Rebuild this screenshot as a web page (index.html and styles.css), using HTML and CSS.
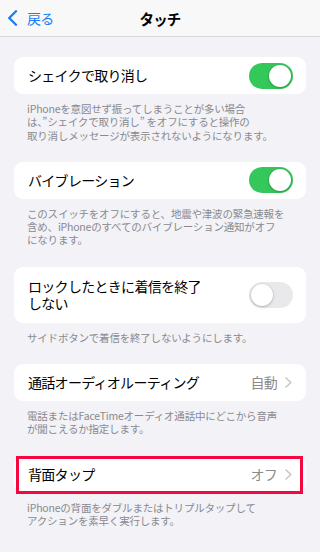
FILE: index.html
```html
<!DOCTYPE html>
<html lang="ja">
<head>
<meta charset="utf-8">
<title>タッチ</title>
<link rel="stylesheet" href="styles.css">
</head>
<body>
<header class="nav">
  <div class="back">
    <svg class="back-chev" width="11" height="16" viewBox="0 0 11 16"><path d="M9 1.2 L2.2 8 L9 14.8" fill="none" stroke="#1a7cf5" stroke-width="2.3" stroke-linecap="round" stroke-linejoin="round"/></svg>
    <span class="back-label">戻る</span>
  </div>
  <div class="nav-title">タッチ</div>
  <div></div>
</header>
<main class="list">
  <section class="group">
    <div class="card">
      <div class="row"><span class="row-label">シェイクで取り消し</span><span class="switch on"></span></div>
    </div>
    <p class="note">iPhoneを意図せず振ってしまうことが多い場合<br>は、”シェイクで取り消し” をオフにすると操作の<br>取り消しメッセージが表示されないようになります。</p>
  </section>
  <section class="group">
    <div class="card">
      <div class="row"><span class="row-label">バイブレーション</span><span class="switch on"></span></div>
    </div>
    <p class="note">このスイッチをオフにすると、地震や津波の緊急速報を<br>含め、iPhoneのすべてのバイブレーション通知がオフ<br>になります。</p>
  </section>
  <section class="group">
    <div class="card">
      <div class="row row-tall"><span class="row-label">ロックしたときに着信を終了<br>しない</span><span class="switch"></span></div>
    </div>
    <p class="note">サイドボタンで着信を終了しないようにします。</p>
  </section>
  <section class="group">
    <div class="card">
      <div class="row"><span class="row-label">通話オーディオルーティング</span><span class="detail"><span class="value">自動</span><svg class="chev" width="7" height="11" viewBox="0 0 7 11"><path d="M1 1 L5.8 5.5 L1 10" fill="none" stroke="#c4c4c7" stroke-width="1.5" stroke-linecap="round" stroke-linejoin="round"/></svg></span></div>
    </div>
    <p class="note">電話またはFaceTimeオーディオ通話中にどこから音声<br>が聞こえるか指定します。</p>
  </section>
  <section class="group">
    <div class="card card-marked">
      <div class="row"><span class="row-label">背面タップ</span><span class="detail"><span class="value">オフ</span><svg class="chev" width="7" height="11" viewBox="0 0 7 11"><path d="M1 1 L5.8 5.5 L1 10" fill="none" stroke="#c4c4c7" stroke-width="1.5" stroke-linecap="round" stroke-linejoin="round"/></svg></span></div>
      <span class="highlight"></span>
    </div>
    <p class="note">iPhoneの背面をダブルまたはトリプルタップして<br>アクションを素早く実行します。</p>
  </section>
</main>
</body>
</html>
```

FILE: styles.css
```css
* { box-sizing: border-box; }
html, body { margin: 0; padding: 0; }
body {
  width: 320px;
  height: 552px;
  overflow: hidden;
  background: #f2f2f7;
  font-family: "Noto Sans CJK JP", "Noto Sans", sans-serif;
  color: #000;
}
.nav {
  height: 37px;
  background: #f8f8f8;
  border-bottom: 1px solid #d7d7db;
  display: grid;
  grid-template-columns: 1fr auto 1fr;
  align-items: center;
}
.back {
  display: flex;
  align-items: center;
  padding-left: 7px;
  gap: 9px;
  color: #1a7cf5;
}
.back-chev { display: block; }
.back-label { font-size: 14px; letter-spacing: -0.7px; line-height: 17px; }
.nav-title {
  font-size: 14.5px;
  font-weight: 700;
  letter-spacing: -0.8px;
  line-height: 17px;
}
.list { padding: 20px 14px 0; }
.group { margin-bottom: 20px; }
.card {
  background: #fff;
  border-radius: 9px;
}
.card-marked { position: relative; }
.row {
  height: 37px;
  padding: 0 13px 0 14px;
  display: flex;
  align-items: center;
  justify-content: space-between;
}
.row-tall { height: 56px; }
.row-label {
  font-size: 14px;
  letter-spacing: -0.7px;
  line-height: 17px;
}
.switch {
  flex: none;
  position: relative;
  width: 44px;
  height: 26px;
  border-radius: 13px;
  background: #e9e9eb;
}
.switch::after {
  content: "";
  position: absolute;
  top: 2px;
  left: 2px;
  width: 22px;
  height: 22px;
  border-radius: 50%;
  background: #fff;
  box-shadow: 0 1px 3px rgba(0,0,0,0.22), 0 0 0 0.5px rgba(0,0,0,0.06);
}
.switch.on { background: #34c759; }
.switch.on::after { left: 20px; }
.detail {
  display: flex;
  align-items: center;
  gap: 8px;
  padding-right: 1px;
}
.value {
  font-size: 14px;
  letter-spacing: -0.7px;
  line-height: 17px;
  color: #8a8a8e;
}
.chev { display: block; }
.note {
  margin: 0;
  padding: 8px 13px 0;
  font-size: 10.5px;
  letter-spacing: -0.2px;
  line-height: 13.3px;
  color: #8a8a8e;
  white-space: nowrap;
}
.highlight {
  position: absolute;
  left: 2px;
  top: 0;
  right: 3px;
  bottom: -1px;
  border: 3px solid #f5083f;
}
```
